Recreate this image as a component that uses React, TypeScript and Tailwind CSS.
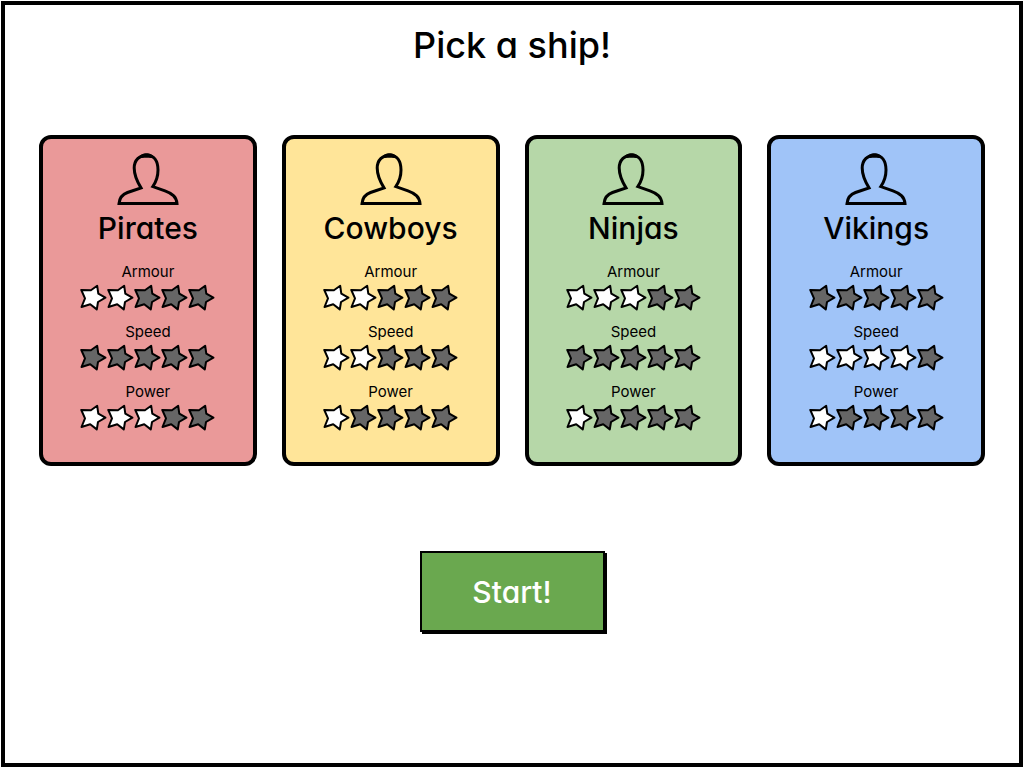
type Ship = {
  name: string;
  color: string;
  armour: number;
  speed: number;
  power: number;
};

const SHIPS: Ship[] = [
  { name: "Pirates", color: "bg-[#ea9999]", armour: 2, speed: 0, power: 3 },
  { name: "Cowboys", color: "bg-[#ffe599]", armour: 2, speed: 2, power: 1 },
  { name: "Ninjas", color: "bg-[#b6d7a8]", armour: 3, speed: 0, power: 1 },
  { name: "Vikings", color: "bg-[#a0c4f8]", armour: 0, speed: 4, power: 1 },
];

function PersonIcon() {
  return (
    <svg viewBox="0 0 62 52" className="h-[52px] w-[62px]" aria-hidden="true">
      <path
        d="M2 50.6C2.5 45 5 41.5 10.5 39.5L24 34.9C19.5 27.5 17.2 21 17.2 15C17.2 7 22.5 2.2 29.5 2.2C37 2.2 41 8 41 17C41 24 39 29 35.8 33.6L48 37.9C55 40.5 59.5 43.5 60 50.6Z"
        fill="none"
        stroke="#000000"
        strokeWidth="3"
      />
      <path d="M20.5 6C23 1.5 26 .2 29.5 .2C33 .2 36.5 1.5 38.5 6C35.5 4.9 32.5 4.8 29.5 4.8C26.5 4.8 23.5 4.9 20.5 6Z" />
    </svg>
  );
}

function Star({ filled }: { filled: boolean }) {
  return (
    <svg viewBox="0 0 27 27" className="size-[27px]" aria-hidden="true">
      <path
        d="M1.3 6L10.9 6.2L17.2 1.8L18.3 9.7L25.4 13.7L18 18L16.8 25.4L10.2 20.2L1.5 23L5 14.3Z"
        fill={filled ? "#ffffff" : "#666666"}
        stroke="#000000"
        strokeWidth="2"
        strokeLinejoin="round"
      />
    </svg>
  );
}

function Stat({ label, value }: { label: string; value: number }) {
  return (
    <div className="flex flex-col items-center gap-0.5">
      <h3 className="text-[15px] leading-5">{label}</h3>
      <div className="flex" role="img" aria-label={`${label}: ${value} of 5`}>
        {[1, 2, 3, 4, 5].map((n) => (
          <Star key={n} filled={n <= value} />
        ))}
      </div>
    </div>
  );
}

function ShipCard({ ship }: { ship: Ship }) {
  return (
    <article
      className={`flex flex-col items-center rounded-xl border-4 border-black pt-3.5 pb-[31px] ${ship.color}`}
    >
      <PersonIcon />
      <h2 className="mt-[3px] text-[30px] leading-10 font-medium">{ship.name}</h2>
      <div className="mt-3.5 flex flex-col gap-[11px]">
        <Stat label="Armour" value={ship.armour} />
        <Stat label="Speed" value={ship.speed} />
        <Stat label="Power" value={ship.power} />
      </div>
    </article>
  );
}

export default function App() {
  return (
    <div className="flex min-h-screen bg-white p-px font-['Inter','Noto_Sans',sans-serif] text-black [font-feature-settings:'cv11']">
      <main className="flex grow flex-col items-center border-4 border-black px-[34px] pt-5">
        <h1 className="text-4xl leading-10 font-medium">Pick a ship!</h1>
        <div className="mt-[70px] grid w-full grid-cols-4 gap-[25px]">
          {SHIPS.map((ship) => (
            <ShipCard key={ship.name} ship={ship} />
          ))}
        </div>
        <button
          type="button"
          className="mt-[85px] h-[81px] w-[185px] border-2 border-black bg-[#6aa84f] text-[30px] leading-10 font-medium text-white shadow-[2px_2px_0_#000]"
        >
          Start!
        </button>
      </main>
    </div>
  );
}
